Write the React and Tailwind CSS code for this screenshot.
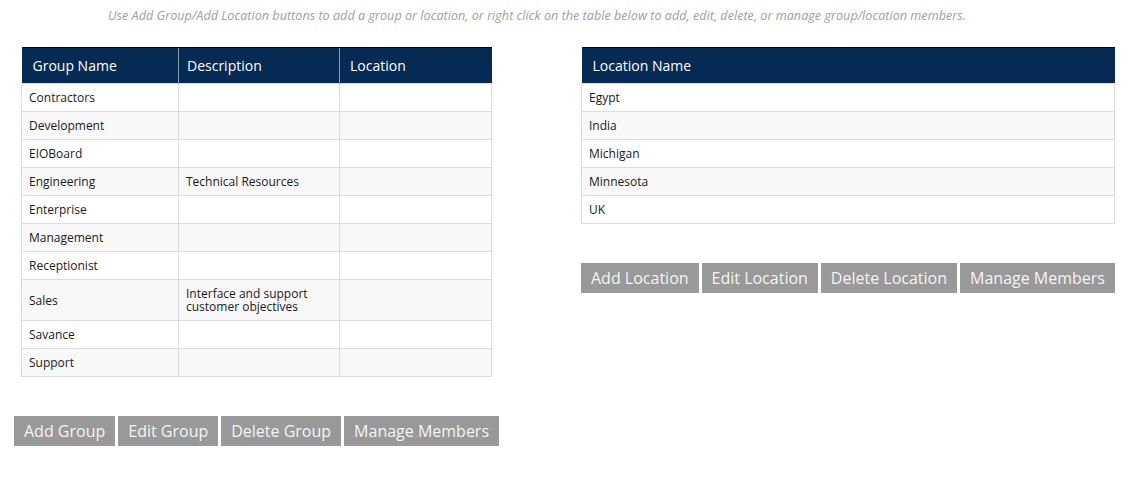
import React from 'react';

const groups = [
  { name: 'Contractors', desc: '' },
  { name: 'Development', desc: '' },
  { name: 'EIOBoard', desc: '' },
  { name: 'Engineering', desc: 'Technical Resources' },
  { name: 'Enterprise', desc: '' },
  { name: 'Management', desc: '' },
  { name: 'Receptionist', desc: '' },
  { name: 'Sales', desc: 'Interface and support customer objectives' },
  { name: 'Savance', desc: '' },
  { name: 'Support', desc: '' },
];

const locations = ['Egypt', 'India', 'Michigan', 'Minnesota', 'UK'];

function ActionButton({ children }) {
  return (
    <button className="h-[30px] px-[10px] pt-[1px] bg-[#999999] text-[#f4f4f4] text-[16px] leading-[29px] whitespace-nowrap">
      {children}
    </button>
  );
}

export default function App() {
  return (
    <div className="w-[1137px] h-[482px] bg-white font-['Open_Sans',sans-serif] text-[#1a1a1a]">
      {/* Hint */}
      <p className="pt-[7px] pl-[108px] text-[12.65px] leading-[16px] italic text-[#a0a0a0] whitespace-nowrap">
        Use Add Group/Add Location buttons to add a group or location, or right click on the table below to add, edit, delete, or manage group/location members.
      </p>

      <div className="flex mt-[24px]">
        {/* Groups */}
        <div className="w-[560px] shrink-0">
          <table className="ml-[21px] w-[470px] border-collapse table-fixed">
            <colgroup>
              <col className="w-[157px]" />
              <col className="w-[161px]" />
              <col className="w-[152px]" />
            </colgroup>
            <thead>
              <tr className="bg-[#052a53] text-white text-[14px] leading-[18px] text-left">
                <th className="font-normal px-[11px] pt-[9px] pb-[8px] border-t border-[#000814]">Group Name</th>
                <th className="font-normal px-[8px] pt-[9px] pb-[8px] border-t border-t-[#000814] border-l border-l-[#8c99a8]">Description</th>
                <th className="font-normal px-[10px] pt-[9px] pb-[8px] border-t border-t-[#000814] border-l border-l-[#8c99a8]">Location</th>
              </tr>
            </thead>
            <tbody className="text-[12px] leading-[13px]">
              {groups.map((g, i) => (
                <tr key={g.name} className={i % 2 === 0 ? 'bg-white' : 'bg-[#f8f8f8]'}>
                  <td className="border border-[#dddddd] px-[7px] py-[7px] align-middle">{g.name}</td>
                  <td className="border border-[#dddddd] px-[7px] py-[7px] align-middle">{g.desc}</td>
                  <td className="border border-[#dddddd] px-[7px] py-[7px]"></td>
                </tr>
              ))}
            </tbody>
          </table>

          <div className="flex gap-[3px] ml-[14px] mt-[39px]">
            <ActionButton>Add Group</ActionButton>
            <ActionButton>Edit Group</ActionButton>
            <ActionButton>Delete Group</ActionButton>
            <ActionButton>Manage Members</ActionButton>
          </div>
        </div>

        {/* Locations */}
        <div className="ml-[21px] w-[534px] shrink-0">
          <table className="w-full border-collapse">
            <thead>
              <tr className="bg-[#052a53] text-white text-[14px] leading-[18px] text-left">
                <th className="font-normal px-[11px] pt-[9px] pb-[8px] border-t border-[#000814]">Location Name</th>
              </tr>
            </thead>
            <tbody className="text-[12px] leading-[13px]">
              {locations.map((l, i) => (
                <tr key={l} className={i % 2 === 0 ? 'bg-white' : 'bg-[#f8f8f8]'}>
                  <td className="border border-[#dddddd] px-[7px] py-[7px]">{l}</td>
                </tr>
              ))}
            </tbody>
          </table>

          <div className="flex gap-[3px] mt-[39px]">
            <ActionButton>Add Location</ActionButton>
            <ActionButton>Edit Location</ActionButton>
            <ActionButton>Delete Location</ActionButton>
            <ActionButton>Manage Members</ActionButton>
          </div>
        </div>
      </div>
    </div>
  );
}
